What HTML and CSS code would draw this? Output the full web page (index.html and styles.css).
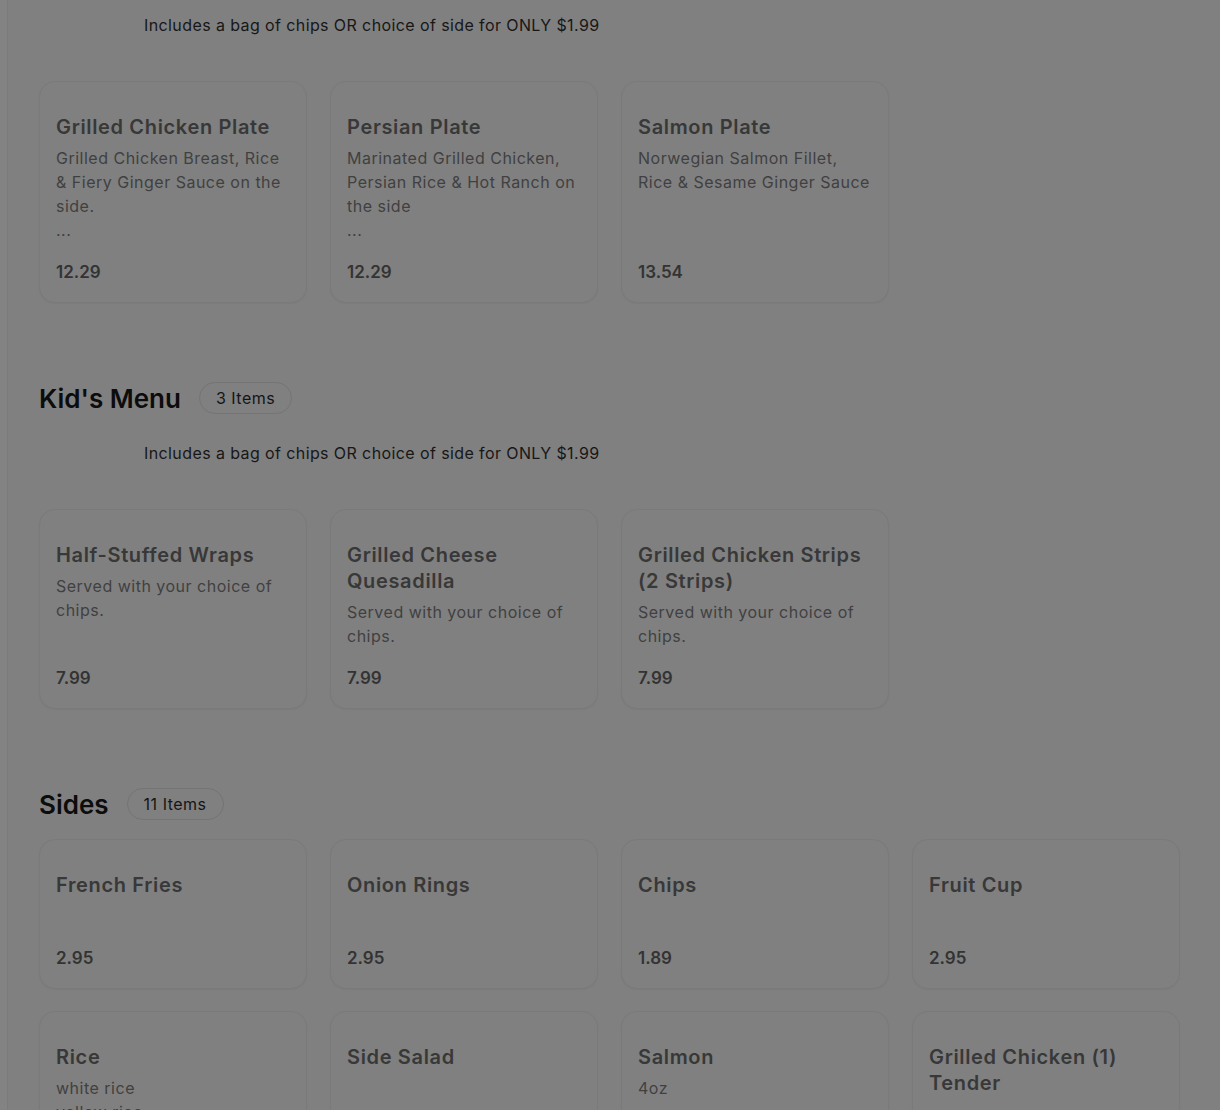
FILE: index.html
```html
<!DOCTYPE html>
<html lang="en">
<head>
<meta charset="utf-8">
<title>Menu</title>
<link rel="stylesheet" href="styles.css">
</head>
<body>
<div class="page">
  <main class="menu">
    <section class="section section-first">
      <p class="note">Includes a bag of chips OR choice of side for ONLY $1.99</p>
      <div class="grid">
        <div class="card">
          <h3 class="card-title">Grilled Chicken Plate</h3>
          <p class="card-desc">Grilled Chicken Breast, Rice &amp; Fiery Ginger Sauce on the side.<br>...</p>
          <div class="card-price">12.29</div>
        </div>
        <div class="card">
          <h3 class="card-title">Persian Plate</h3>
          <p class="card-desc">Marinated Grilled Chicken, Persian Rice &amp; Hot Ranch on the side<br>...</p>
          <div class="card-price">12.29</div>
        </div>
        <div class="card">
          <h3 class="card-title">Salmon Plate</h3>
          <p class="card-desc">Norwegian Salmon Fillet, Rice &amp; Sesame Ginger Sauce</p>
          <div class="card-price">13.54</div>
        </div>
      </div>
    </section>

    <section class="section">
      <div class="section-head">
        <h2 class="section-title">Kid's Menu</h2>
        <span class="badge">3 Items</span>
      </div>
      <p class="note">Includes a bag of chips OR choice of side for ONLY $1.99</p>
      <div class="grid">
        <div class="card">
          <h3 class="card-title">Half-Stuffed Wraps</h3>
          <p class="card-desc">Served with your choice of chips.</p>
          <div class="card-price">7.99</div>
        </div>
        <div class="card">
          <h3 class="card-title">Grilled Cheese Quesadilla</h3>
          <p class="card-desc">Served with your choice of chips.</p>
          <div class="card-price">7.99</div>
        </div>
        <div class="card">
          <h3 class="card-title">Grilled Chicken Strips (2 Strips)</h3>
          <p class="card-desc">Served with your choice of chips.</p>
          <div class="card-price">7.99</div>
        </div>
      </div>
    </section>

    <section class="section">
      <div class="section-head section-head-tight">
        <h2 class="section-title">Sides</h2>
        <span class="badge">11 Items</span>
      </div>
      <div class="grid">
        <div class="card">
          <h3 class="card-title">French Fries</h3>
          <p class="card-desc"></p>
          <div class="card-price">2.95</div>
        </div>
        <div class="card">
          <h3 class="card-title">Onion Rings</h3>
          <p class="card-desc"></p>
          <div class="card-price">2.95</div>
        </div>
        <div class="card">
          <h3 class="card-title">Chips</h3>
          <p class="card-desc"></p>
          <div class="card-price">1.89</div>
        </div>
        <div class="card">
          <h3 class="card-title">Fruit Cup</h3>
          <p class="card-desc"></p>
          <div class="card-price">2.95</div>
        </div>
        <div class="card">
          <h3 class="card-title">Rice</h3>
          <p class="card-desc">white rice<br>yellow rice</p>
          <div class="card-price">2.95</div>
        </div>
        <div class="card">
          <h3 class="card-title">Side Salad</h3>
          <p class="card-desc"></p>
          <div class="card-price">3.49</div>
        </div>
        <div class="card">
          <h3 class="card-title">Salmon</h3>
          <p class="card-desc">4oz</p>
          <div class="card-price">5.99</div>
        </div>
        <div class="card">
          <h3 class="card-title">Grilled Chicken (1) Tender</h3>
          <p class="card-desc"></p>
          <div class="card-price">2.49</div>
        </div>
      </div>
    </section>
  </main>
</div>
</body>
</html>
```

FILE: styles.css
```css
html, body {
  margin: 0;
  padding: 0;
  background: #808080;
}

body {
  font-family: Inter, "Open Sans", "DejaVu Sans", sans-serif;
  color: #1a1a1a;
  height: 1110px;
  overflow: hidden;
}

.page {
  border-left: 7px solid #838383;
  box-shadow: inset 1px 0 0 #7b7b7b;
  min-height: 100%;
}

.menu {
  width: 1141px;
  margin: 0 0 0 32px;
  padding-top: 13px;
}

.section {
  margin-bottom: 80px;
}

.section-head {
  display: flex;
  align-items: center;
  gap: 18px;
  height: 32px;
}

.section-title {
  margin: 0;
  font-size: 26px;
  font-weight: 600;
  color: #0c0c0c;
  line-height: 32px;
}

.badge {
  display: inline-flex;
  align-items: center;
  height: 30px;
  margin-top: -2px;
  padding: 0 16px;
  border: 1px solid #747474;
  border-radius: 999px;
  font-size: 16px;
  letter-spacing: 0.5px;
  color: #151515;
}

.note {
  margin: 26px 0 44px 105px;
  font-size: 16px;
  line-height: 24px;
  letter-spacing: 0.4px;
  color: #171717;
}

.section-first .note {
  margin-top: 0;
  margin-bottom: 44px;
}

.section-head-tight {
  margin-bottom: 18px;
}

.grid {
  display: grid;
  grid-template-columns: repeat(4, 268px);
  column-gap: 23px;
  row-gap: 22px;
}

.card {
  display: flex;
  flex-direction: column;
  padding: 32px 16px 16px;
  border: 1px solid #7a7a7a;
  border-radius: 16px;
  background: #808080;
  box-shadow: 0 1px 2px rgba(0, 0, 0, 0.04);
}

.card-title {
  margin: 0;
  font-size: 20px;
  line-height: 26px;
  font-weight: 600;
  letter-spacing: 0.65px;
  color: #383838;
}

.card-desc {
  margin: 6px 0 0;
  min-height: 24px;
  font-size: 16px;
  line-height: 24px;
  letter-spacing: 0.5px;
  color: #404040;
}

.card-price {
  margin-top: auto;
  padding-top: 16px;
  font-size: 17px;
  line-height: 28px;
  font-weight: 600;
  color: #333333;
}
```
